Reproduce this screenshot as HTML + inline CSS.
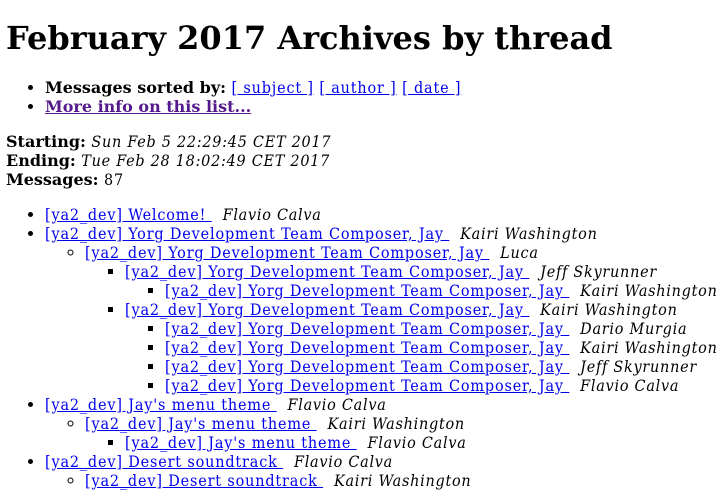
<!DOCTYPE html>
<html><head><meta charset="utf-8">
<style>
body{margin:8px 6px;font-family:"DejaVu Serif Condensed","DejaVu Serif","DejaVu Sans",sans-serif;font-size:16px;line-height:19px;color:#000;background:#fff;white-space:nowrap;letter-spacing:0.85px;}
h1{font-family:"DejaVu Serif",serif;font-size:32px;line-height:38px;margin:19px 0 21px;letter-spacing:0;}
b{font-family:"DejaVu Serif",serif;font-weight:bold;letter-spacing:0;}
i{letter-spacing:0.75px;}
ul{margin:0;padding-left:39px;}
ul.top{margin:16px 0 16px;}
p{margin:0;}
a{color:#0000ee;}
a.v{color:#551a8b;}
ul ul{list-style-type:circle;padding-left:40px;}
ul ul ul{list-style-type:square;}
</style></head><body>
<h1>February 2017 Archives by thread</h1>
<ul class="top">
<li><b>Messages sorted by:</b> <a href="#">[ subject ]</a> <a href="#">[ author ]</a> <a href="#">[ date ]</a></li>
<li><b><a class="v" href="#">More info on this list...</a></b></li>
</ul>
<p><b>Starting:</b> <i>Sun Feb 5 22:29:45 CET 2017</i><br>
<b>Ending:</b> <i>Tue Feb 28 18:02:49 CET 2017</i><br>
<b>Messages:</b> 87</p>
<ul class="thread" style="margin-top:16px">
<li><a href="#">[ya2_dev] Welcome!&nbsp;</a>&nbsp; <i>Flavio Calva</i></li>
<li><a href="#">[ya2_dev] Yorg Development Team Composer, Jay&nbsp;</a>&nbsp; <i>Kairi Washington</i>
<ul>
<li><a href="#">[ya2_dev] Yorg Development Team Composer, Jay&nbsp;</a>&nbsp; <i>Luca</i>
<ul>
<li><a href="#">[ya2_dev] Yorg Development Team Composer, Jay&nbsp;</a>&nbsp; <i>Jeff Skyrunner</i>
<ul><li><a href="#">[ya2_dev] Yorg Development Team Composer, Jay&nbsp;</a>&nbsp; <i>Kairi Washington</i></li></ul></li>
<li><a href="#">[ya2_dev] Yorg Development Team Composer, Jay&nbsp;</a>&nbsp; <i>Kairi Washington</i>
<ul>
<li><a href="#">[ya2_dev] Yorg Development Team Composer, Jay&nbsp;</a>&nbsp; <i>Dario Murgia</i></li>
<li><a href="#">[ya2_dev] Yorg Development Team Composer, Jay&nbsp;</a>&nbsp; <i>Kairi Washington</i></li>
<li><a href="#">[ya2_dev] Yorg Development Team Composer, Jay&nbsp;</a>&nbsp; <i>Jeff Skyrunner</i></li>
<li><a href="#">[ya2_dev] Yorg Development Team Composer, Jay&nbsp;</a>&nbsp; <i>Flavio Calva</i></li>
</ul></li>
</ul></li>
</ul></li>
<li><a href="#">[ya2_dev] Jay's menu theme&nbsp;</a>&nbsp; <i>Flavio Calva</i>
<ul><li><a href="#">[ya2_dev] Jay's menu theme&nbsp;</a>&nbsp; <i>Kairi Washington</i>
<ul><li><a href="#">[ya2_dev] Jay's menu theme&nbsp;</a>&nbsp; <i>Flavio Calva</i></li></ul></li></ul></li>
<li><a href="#">[ya2_dev] Desert soundtrack&nbsp;</a>&nbsp; <i>Flavio Calva</i>
<ul><li><a href="#">[ya2_dev] Desert soundtrack&nbsp;</a>&nbsp; <i>Kairi Washington</i></li></ul></li>
</ul>
</body></html>
